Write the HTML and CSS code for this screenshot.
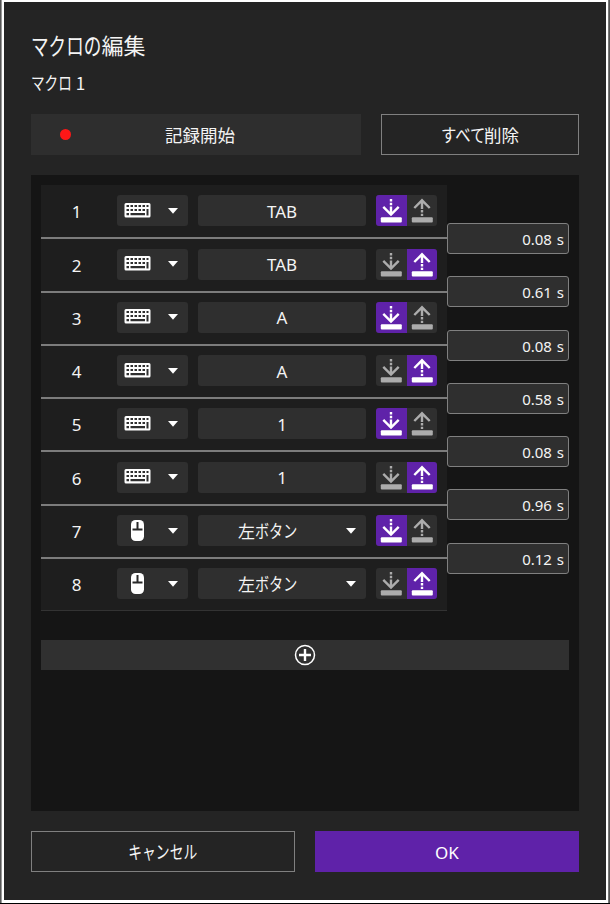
FILE: index.html
```
<!DOCTYPE html>
<html lang="ja">
<head>
<meta charset="utf-8">
<title>マクロの編集</title>
<link rel="stylesheet" href="styles.css">
</head>
<body>
<svg class="defs" aria-hidden="true">
  <symbol id="keyboard" viewBox="0 0 26 15">
    <path fill-rule="evenodd" fill="#fff" d="M1.500 0H24.500Q26 0 26 1.500V13Q26 14.500 24.500 14.500H1.500Q0 14.500 0 13V1.500Q0 0 1.500 0Z
    M2 2v2h2.500v-2zM6 2v2h2.500v-2zM10 2v2h2.500v-2zM14 2v2h2.500v-2zM18 2v2h2.500v-2zM22 2v2h2v-2z
    M2 6v2h2.500v-2zM6 6v2h2.500v-2zM10 6v2h2.500v-2zM14 6v2h2.500v-2zM18 6v2h2.500v-2zM22 6v6.500h2v-6.500z
    M2 10v2.300h2.500v-2.300zM6 10v2.300h14.500v-2.300z"/>
  </symbol>
  <symbol id="mouse" viewBox="0 0 13 21">
    <rect width="13" height="21" rx="4.500" fill="#fff"/>
    <path d="M6.500 2V9.500M1.500 9.500H11.500" stroke="#292929" stroke-width="2" fill="none"/>
  </symbol>
  <symbol id="press" viewBox="0 0 30 30">
    <path d="M15 3.500v2.500M15 7.200v2.500M15 11v8M7.300 11.300L15 19L22.700 11.300" fill="none" stroke="currentColor" stroke-width="2.400"/>
    <rect x="4.800" y="21.700" width="21" height="5.200" rx="1" fill="currentColor"/>
  </symbol>
  <symbol id="release" viewBox="0 0 30 30">
    <path d="M15 20.400v-2.200M15 17v-2.400M15 13.400v-8M7.300 12.500L15 4.800L22.700 12.500" fill="none" stroke="currentColor" stroke-width="2.400"/>
    <rect x="4.800" y="21.700" width="21" height="5.200" rx="1" fill="currentColor"/>
  </symbol>
  <symbol id="caret" viewBox="0 0 10 6"><path d="M0 0H10L5 5.800Z" fill="#fff"/></symbol>
</svg>
<main class="dialog">
  <h1 class="title"><span class="kana">マクロの</span>編集</h1>
  <p class="name"><span class="kana">マクロ</span> 1</p>
  <div class="actions">
    <button class="btn record"><span class="dot"></span>記録開始</button>
    <button class="btn outline clear"><span class="kana">すべて</span>削除</button>
  </div>
  <section class="panel">
    <div class="timeline">
      <ol class="events" id="events"></ol>
      <div class="delays" id="delays"></div>
    </div>
    <button class="add" aria-label="追加">
      <svg width="22" height="22" viewBox="0 0 22 22" fill="none" stroke="#fff"><circle cx="11" cy="11" r="9.500" stroke-width="1.500"/><path d="M11 5V17M5 11H17" stroke-width="2.400"/></svg>
    </button>
  </section>
  <footer class="footer">
    <button class="btn outline"><span class="kana small">キャンセル</span></button>
    <button class="btn primary">OK</button>
  </footer>
</main>
<script src="app.js"></script>
</body>
</html>
```
FILE: styles.css
```
* { box-sizing: border-box; }
html { background: #000; }
body {
  margin: 0;
  width: 610px;
  height: 904px;
  padding-bottom: 1px;
  overflow: hidden;
  color: #f4f4f4;
  font-family: "Noto Sans", "Noto Sans CJK JP", sans-serif;
  font-size: 17px;
}
.defs { display: none; }
.dialog {
  height: 903px;
  padding: 25px 27px 0 27px;
  background: #242424;
  border: solid #fff;
  border-width: 2px 4px 3px 4px;
  border-image: linear-gradient(90deg, #555 0 1px, #999 1px 2px, #fff 2px 608px, #777 608px 609px, #555 609px) 2 4 3 4;
  display: flex;
  flex-direction: column;
}
.title, .name {
  margin: 0;
  font-family: "Noto Sans CJK JP", sans-serif;
  font-weight: 400;
  white-space: pre;
}
.title { height: 34px; font-size: 22px; line-height: 34px; }
.name { height: 28px; margin-top: 8px; font-size: 17px; line-height: 28px; }
.kana {
  display: inline-block;
  transform: scale(.8, 1.07);
  transform-origin: left;
}
.title .kana { margin-right: -17.500px; }
.name .kana { margin-right: -10px; }
.actions {
  display: grid;
  grid-template-columns: 330px 198px;
  gap: 20px;
  height: 41px;
  margin-top: 17px;
}
.btn {
  display: flex;
  align-items: center;
  justify-content: center;
  padding: 0;
  border: 0;
  background: #2e2e2e;
  color: #f4f4f4;
  font: 17.500px/24px "Noto Sans CJK JP", sans-serif;
}
.outline { background: #242424; border: 1px solid #808080; }
.record { position: relative; padding-left: 8px; }
.dot {
  position: absolute;
  left: 29px;
  top: 15px;
  width: 11px;
  height: 11px;
  border-radius: 50%;
  background: #ff1717;
}
.clear .kana { transform: scale(.88, 1.04); margin-right: -7.500px; }
.panel {
  height: 636px;
  margin-top: 20px;
  padding: 10px;
  background: #151515;
}
.timeline { display: flex; align-items: flex-start; height: 454.500px; }
.events {
  width: 406px;
  margin: 0;
  padding: 1px 0 0;
  list-style: none;
  background: #1e1e1e;
}
.event {
  display: grid;
  grid-template-columns: 70px 71px 168px 61px;
  column-gap: 0;
  height: 53.300px;
  padding-top: 9.300px;
  border-bottom: 2px solid #7c7c7c;
  grid-template-rows: 31px;
}
.event:last-child { height: 52.400px; border-bottom: 1px solid #333; }
.num { text-align: center; line-height: 33px; font-size: 17px; padding-left: 1px; }
.kind, .value, .toggle {
  display: flex;
  align-items: center;
  background: #2f2f2f;
  border-radius: 3px;
}
.kind { margin-left: 6px; margin-right: -6px; justify-content: space-between; padding: 0 10px 0 7px; }
.kind .device { width: 27px; height: 15px; margin-bottom: 1px; }
.kind .device.mouse { width: 13px; height: 21px; margin-left: 7px; }
.caret { width: 10px; height: 6px; }
.value { margin-left: 16px; margin-right: -16px; justify-content: center; font-size: 17px; line-height: 24px; padding-top: 2px; }
.value.menu { justify-content: space-between; padding: 0 10px 0 40px; font: 17px/24px "Noto Sans CJK JP", sans-serif; }
.value .kana { transform: scale(.83, 1.04); margin-right: -9px; }
.toggle { margin-left: 26px; margin-right: -26px; overflow: hidden; }
.half { width: 30.500px; height: 31px; color: #acacac; }
.half svg { display: block; width: 30px; height: 31px; }
.half.on { background: #5f22a9; color: #fff; }
.delays { width: 122px; padding-top: 38px; display: flex; flex-direction: column; gap: 22.300px; }
.delay {
  height: 31px;
  padding: 1px 4px 0 0;
  border: 1px solid #808080;
  border-radius: 3px;
  background: #2f2f2f;
  text-align: right;
  line-height: 29px;
  font-size: 15px;
  word-spacing: 1px;
}
.add {
  display: flex;
  align-items: center;
  justify-content: center;
  width: 528px;
  height: 30px;
  padding: 0;
  border: 0;
  background: #303030;
}
.footer {
  display: grid;
  grid-template-columns: 264px 264px;
  gap: 20px;
  height: 41px;
  margin-top: 20px;
}
.small { transform: scale(.79, 1.04); transform-origin: center; }
.primary { background: #5f22a9; color: #fff; font-family: "Noto Sans", sans-serif; font-size: 17px; padding-top: 2px; }
```
FILE: app.js
```
const events = [
  ["keyboard", "TAB", "press"], ["keyboard", "TAB", "release"],
  ["keyboard", "A", "press"], ["keyboard", "A", "release"],
  ["keyboard", "1", "press"], ["keyboard", "1", "release"],
  ["mouse", "左ボタン", "press"], ["mouse", "左ボタン", "release"]
];
const delays = ["0.08", "0.61", "0.08", "0.58", "0.08", "0.96", "0.12"];
const icon = (id, cls = "") => `<svg class="${cls}"><use href="#${id}"/></svg>`;

document.getElementById("events").innerHTML = events.map(([device, value, action], i) => {
  const field = device === "mouse"
    ? `<div class="value menu"><span>左<span class="kana">ボタン</span></span>${icon("caret", "caret")}</div>`
    : `<div class="value">${value}</div>`;
  const half = id => `<div class="half${action === id ? " on" : ""}">${icon(id)}</div>`;
  return `<li class="event"><span class="num">${i + 1}</span>
    <div class="kind">${icon(device, "device " + device)}${icon("caret", "caret")}</div>
    ${field}<div class="toggle">${half("press")}${half("release")}</div></li>`;
}).join("");

document.getElementById("delays").innerHTML = delays.map(d => `<div class="delay">${d} s</div>`).join("");
```
